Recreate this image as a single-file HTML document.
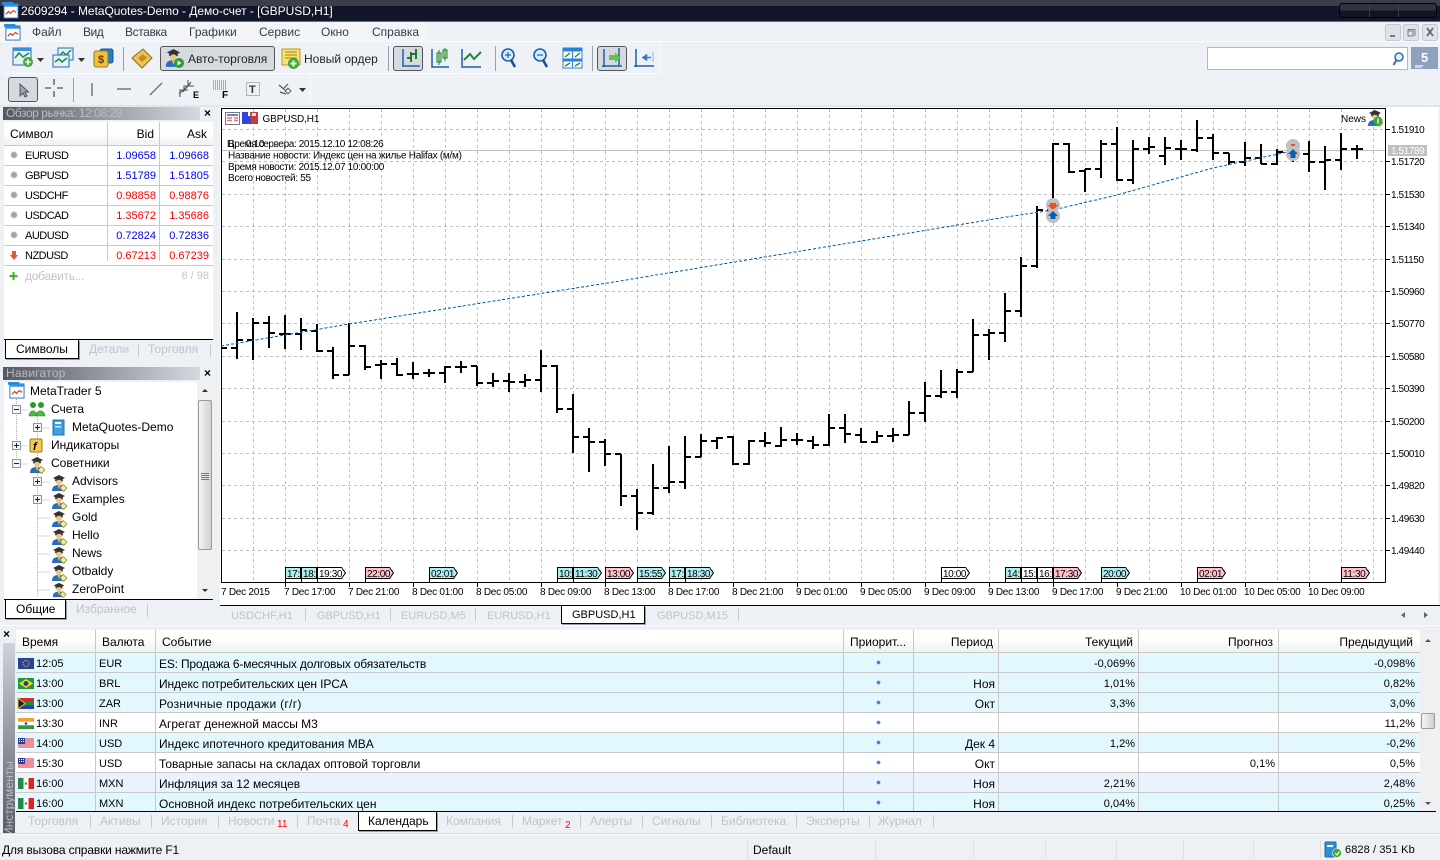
<!DOCTYPE html>
<html lang="ru"><head><meta charset="utf-8"><title>MetaTrader 5</title>
<style>
html,body{margin:0;padding:0}
body{position:relative;width:1440px;height:860px;overflow:hidden;background:#edf0f5;font:12px/14px "Liberation Sans","Noto Sans CJK SC",sans-serif;color:#000}
.a{position:absolute}
.t{position:absolute;white-space:nowrap;line-height:14px}
.g{color:#c0c4ca}
.bl{color:#00f;font-size:11px}.rd{color:#f00;font-size:11px}
.s{font-size:11px;letter-spacing:-.5px}
.e{font-size:11px}
.hd{position:absolute;left:3px;width:197px;height:13px;background:linear-gradient(90deg,#55575f,#d6d9e1);color:#b8bbc2;font-size:12px;line-height:13px;padding-left:3px;box-sizing:border-box}
.wh{position:absolute;background:#fff}
.ln{position:absolute;background:#c9c9c9}
.row{position:absolute;left:16px;width:1404px;height:20px;box-shadow:inset 0 -1px 0 #c9c9c9}
.row span{position:absolute;top:4px;white-space:nowrap;line-height:14px}
.tm{left:20px;font-size:11px}.cu{left:83px;font-size:11px}.ev{left:143px}
.p{right:425px}.c{right:285px;font-size:11px}.f{right:145px;font-size:11px}.v{right:5px;font-size:11px}
.dot{left:861px;top:8px!important;width:3px;height:3px;border-radius:50%;background:#3a7ce8;box-shadow:0 0 0 .5px #8fb6f2}
.act{position:absolute;background:#fff;border:1px solid #000;border-top:none;box-sizing:border-box;box-shadow:1px 1px 0 #9aa0a8}
svg text{font-family:"Liberation Sans",sans-serif}
</style></head>
<body>
<!-- title bar -->
<div class="a" style="left:0;top:0;width:1440px;height:6px;background:#3b3d49"></div>
<div class="a" style="left:0;top:6px;width:1440px;height:15px;background:#12162a"></div>
<div class="a" style="left:0;top:21px;width:1440px;height:1px;background:#6a6d78"></div>
<div class="t" style="left:21px;top:4px;color:#fff;letter-spacing:-.04px">2609294 - MetaQuotes-Demo - Демо-счет - [GBPUSD,H1]</div>
<div class="a" style="left:1339px;top:3px;width:98px;height:15px;box-sizing:border-box;border:1px solid #000;border-radius:3px;background:linear-gradient(#30323e 50%,#12141f 50%)"></div>
<div class="a" style="left:1369px;top:4px;width:1px;height:13px;background:#3c3e4a"></div>
<div class="a" style="left:1398px;top:4px;width:1px;height:13px;background:#3c3e4a"></div>
<!-- menu -->
<div class="a" style="left:0;top:22px;width:428px;height:19px;background:#f2f4f8"></div>
<div class="a" style="left:0;top:41px;width:1440px;height:1px;background:#fafbfc"></div>
<div class="t" style="left:32px;top:25px;color:#333c4a">Файл</div>
<div class="t" style="left:83px;top:25px;color:#333c4a;letter-spacing:-.5px">Вид</div>
<div class="t" style="left:125px;top:25px;color:#333c4a;letter-spacing:-.4px">Вставка</div>
<div class="t" style="left:189px;top:25px;color:#333c4a">Графики</div>
<div class="t" style="left:259px;top:25px;color:#333c4a">Сервис</div>
<div class="t" style="left:321px;top:25px;color:#333c4a">Окно</div>
<div class="t" style="left:372px;top:25px;color:#333c4a">Справка</div>
<!-- toolbars -->
<div class="a" style="left:3px;top:42px;width:657px;height:31px;background:#eef1f5;border-right:1px solid #fafbfc;border-bottom:1px solid #fafbfc"></div>
<div class="a" style="left:3px;top:74px;width:307px;height:29px;background:#eef1f5;border-right:1px solid #fafbfc"></div>
<div class="a" style="left:160px;top:46px;width:115px;height:25px;box-sizing:border-box;border:1px solid #555;border-radius:3px;background:#d6dae0"></div>
<div class="a" style="left:393px;top:46px;width:30px;height:25px;box-sizing:border-box;border:1px solid #555;border-radius:3px;background:#d6dae0"></div>
<div class="a" style="left:597px;top:46px;width:30px;height:25px;box-sizing:border-box;border:1px solid #555;border-radius:3px;background:#d6dae0"></div>
<div class="a" style="left:8px;top:77px;width:30px;height:25px;box-sizing:border-box;border:1px solid #555;border-radius:3px;background:#d6dae0"></div>
<div class="t" style="left:188px;top:52px;color:#222">Авто-торговля</div>
<div class="t" style="left:304px;top:52px;color:#222">Новый ордер</div>
<!-- search -->
<div class="a" style="left:1207px;top:47px;width:201px;height:23px;box-sizing:border-box;background:#fff;border:1px solid #b4b8bf"></div>
<div class="a" style="left:1411px;top:47px;width:27px;height:22px;background:#8ea2c0"></div>
<div class="t" style="left:1421px;top:51px;color:#fff;font-weight:bold;font-size:13px">5</div>
<!-- market watch -->
<div class="a" style="left:0;top:105px;width:1440px;height:2px;background:#e2e5ea"></div>
<div class="hd" style="top:107px;letter-spacing:-.45px">Обзор рынка: 12:08:28</div>
<div class="t" style="left:204px;top:106px;font-weight:bold">×</div>
<div class="wh" style="left:4px;top:122px;width:209px;height:217px"></div>
<div class="a" style="left:4px;top:122px;width:209px;height:23px;background:linear-gradient(#fff 50%,#f0f1f3);border-bottom:1px solid #c9c9c9"></div>
<div class="ln" style="left:107px;top:122px;width:1px;height:139px"></div>
<div class="ln" style="left:159px;top:122px;width:1px;height:139px"></div>
<div class="ln" style="left:4px;top:165px;width:209px;height:1px"></div>
<div class="ln" style="left:4px;top:185px;width:209px;height:1px"></div>
<div class="ln" style="left:4px;top:205px;width:209px;height:1px"></div>
<div class="ln" style="left:4px;top:225px;width:209px;height:1px"></div>
<div class="ln" style="left:4px;top:245px;width:209px;height:1px"></div>
<div class="ln" style="left:4px;top:265px;width:209px;height:1px"></div>
<div class="t" style="left:10px;top:127px">Символ</div>
<div class="t" style="right:1286px;top:127px">Bid</div>
<div class="t" style="right:1233px;top:127px">Ask</div>
<div class="t s" style="left:25px;top:149px">EURUSD</div><div class="t bl" style="right:1284px;top:149px">1.09658</div><div class="t bl" style="right:1231px;top:149px">1.09668</div>
<div class="t s" style="left:25px;top:169px">GBPUSD</div><div class="t bl" style="right:1284px;top:169px">1.51789</div><div class="t bl" style="right:1231px;top:169px">1.51805</div>
<div class="t s" style="left:25px;top:189px">USDCHF</div><div class="t rd" style="right:1284px;top:189px">0.98858</div><div class="t rd" style="right:1231px;top:189px">0.98876</div>
<div class="t s" style="left:25px;top:209px">USDCAD</div><div class="t rd" style="right:1284px;top:209px">1.35672</div><div class="t rd" style="right:1231px;top:209px">1.35686</div>
<div class="t s" style="left:25px;top:229px">AUDUSD</div><div class="t bl" style="right:1284px;top:229px">0.72824</div><div class="t bl" style="right:1231px;top:229px">0.72836</div>
<div class="t s" style="left:25px;top:249px">NZDUSD</div><div class="t rd" style="right:1284px;top:249px">0.67213</div><div class="t rd" style="right:1231px;top:249px">0.67239</div>
<div class="t g" style="left:25px;top:269px;letter-spacing:-.25px">добавить...</div>
<div class="t g e" style="right:1231px;top:269px">6 / 98</div>
<div class="a" style="left:4px;top:339px;width:209px;height:1px;background:#000"></div>
<div class="act" style="left:5px;top:340px;width:74px;height:19px"></div>
<div class="t" style="left:16px;top:342px">Символы</div>
<div class="t g" style="left:89px;top:342px">Детали</div>
<div class="ln" style="left:138px;top:344px;width:1px;height:13px"></div>
<div class="t g" style="left:148px;top:342px">Торговля</div>
<div class="ln" style="left:210px;top:344px;width:1px;height:13px"></div>
<!-- navigator -->
<div class="hd" style="top:367px;letter-spacing:.2px">Навигатор</div>
<div class="t" style="left:204px;top:366px;font-weight:bold">×</div>
<div class="wh" style="left:4px;top:382px;width:209px;height:217px"></div>
<div class="a" style="left:197px;top:382px;width:16px;height:217px;background:#f1f1f1"></div>
<div class="a" style="left:198px;top:400px;width:14px;height:150px;box-sizing:border-box;border:1px solid #9a9a9a;border-radius:2px;background:linear-gradient(90deg,#f4f4f4,#d0d0d0)"></div>
<div class="t" style="left:30px;top:384px">MetaTrader 5</div>
<div class="t" style="left:51px;top:402px">Счета</div>
<div class="t" style="left:72px;top:420px">MetaQuotes-Demo</div>
<div class="t" style="left:51px;top:438px">Индикаторы</div>
<div class="t" style="left:51px;top:456px">Советники</div>
<div class="t" style="left:72px;top:474px">Advisors</div>
<div class="t" style="left:72px;top:492px">Examples</div>
<div class="t" style="left:72px;top:510px">Gold</div>
<div class="t" style="left:72px;top:528px">Hello</div>
<div class="t" style="left:72px;top:546px">News</div>
<div class="t" style="left:72px;top:564px">Otbaldy</div>
<div class="t" style="left:72px;top:582px">ZeroPoint</div>
<div class="a" style="left:4px;top:599px;width:209px;height:1px;background:#000"></div>
<div class="act" style="left:5px;top:600px;width:61px;height:19px"></div>
<div class="t" style="left:16px;top:602px">Общие</div>
<div class="t g" style="left:76px;top:602px">Избранное</div>
<div class="ln" style="left:147px;top:604px;width:1px;height:13px"></div>
<!-- chart bg -->
<div class="wh" style="left:220px;top:107px;width:1218px;height:498px"></div>
<!-- chart tabs -->
<div class="a" style="left:220px;top:605px;width:1220px;height:1px;background:#000"></div>
<div class="act" style="left:561px;top:606px;width:84px;height:18px"></div>
<div class="t g e" style="left:231px;top:609px">USDCHF,H1</div>
<div class="ln" style="left:305px;top:608px;width:1px;height:13px"></div>
<div class="t g e" style="left:317px;top:609px">GBPUSD,H1</div>
<div class="ln" style="left:390px;top:608px;width:1px;height:13px"></div>
<div class="t g e" style="left:401px;top:609px">EURUSD,M5</div>
<div class="ln" style="left:475px;top:608px;width:1px;height:13px"></div>
<div class="t g e" style="left:487px;top:609px">EURUSD,H1</div>
<div class="t e" style="left:572px;top:608px">GBPUSD,H1</div>
<div class="t g e" style="left:657px;top:609px">GBPUSD,M15</div>
<div class="ln" style="left:738px;top:608px;width:1px;height:13px"></div>
<div class="a" style="left:0;top:625px;width:1440px;height:1px;background:#fafbfc"></div>
<!-- bottom panel -->
<div class="t" style="left:3px;top:627px;font-weight:bold">×</div>
<div class="a" style="left:3px;top:643px;width:12px;height:190px;background:linear-gradient(#cfd2d8,#5a5c64)"></div>
<div class="t" style="left:-29px;top:791px;width:76px;color:#b9bcc3;transform:rotate(-90deg)">Инструменты</div>
<div class="a" style="left:16px;top:630px;width:1404px;height:23px;box-sizing:border-box;background:linear-gradient(#fff 40%,#eff0f2);border-bottom:1px solid #c9c9c9"></div>
<div class="t" style="left:22px;top:635px">Время</div>
<div class="t" style="left:102px;top:635px">Валюта</div>
<div class="t" style="left:162px;top:635px">Событие</div>
<div class="t" style="left:850px;top:635px">Приорит...</div>
<div class="t" style="right:447px;top:635px">Период</div>
<div class="t" style="right:307px;top:635px">Текущий</div>
<div class="t" style="right:167px;top:635px">Прогноз</div>
<div class="t" style="right:27px;top:635px">Предыдущий</div>
<div class="row" style="top:653px;background:#e3f8fe"><span class="tm">12:05</span><span class="cu">EUR</span><span class="ev" style="letter-spacing:-.18px">ES: Продажа 6-месячных долговых обязательств</span><i class="dot a" style="top:9px"></i><span class="c">-0,069%</span><span class="v">-0,098%</span></div>
<div class="row" style="top:673px;background:#e3f8fe"><span class="tm">13:00</span><span class="cu">BRL</span><span class="ev" style="letter-spacing:-.12px">Индекс потребительских цен IPCA</span><i class="dot a" style="top:9px"></i><span class="p">Ноя</span><span class="c">1,01%</span><span class="v">0,82%</span></div>
<div class="row" style="top:693px;background:#e3f8fe"><span class="tm">13:00</span><span class="cu">ZAR</span><span class="ev" style="letter-spacing:.3px">Розничные продажи (г/г)</span><i class="dot a" style="top:9px"></i><span class="p">Окт</span><span class="c">3,3%</span><span class="v">3,0%</span></div>
<div class="row" style="top:713px;background:#fff"><span class="tm">13:30</span><span class="cu">INR</span><span class="ev">Агрегат денежной массы М3</span><i class="dot a" style="top:9px"></i><span class="v">11,2%</span></div>
<div class="row" style="top:733px;background:#e3f8fe"><span class="tm">14:00</span><span class="cu">USD</span><span class="ev">Индекс ипотечного кредитования MBA</span><i class="dot a" style="top:9px"></i><span class="p">Дек 4</span><span class="c">1,2%</span><span class="v">-0,2%</span></div>
<div class="row" style="top:753px;background:#fff"><span class="tm">15:30</span><span class="cu">USD</span><span class="ev" style="letter-spacing:-.05px">Товарные запасы на складах оптовой торговли</span><i class="dot a" style="top:9px"></i><span class="p">Окт</span><span class="f">0,1%</span><span class="v">0,5%</span></div>
<div class="row" style="top:773px;background:#e8f3fd"><span class="tm">16:00</span><span class="cu">MXN</span><span class="ev">Инфляция за 12 месяцев</span><i class="dot a" style="top:9px"></i><span class="p">Ноя</span><span class="c">2,21%</span><span class="v">2,48%</span></div>
<div class="row" style="top:793px;height:18px;background:#e3f8fe;box-shadow:none;overflow:hidden"><span class="tm">16:00</span><span class="cu">MXN</span><span class="ev">Основной индекс потребительских цен</span><i class="dot a" style="top:9px"></i><span class="p">Ноя</span><span class="c">0,04%</span><span class="v">0,25%</span></div>
<div class="ln" style="left:95px;top:630px;width:1px;height:181px"></div>
<div class="ln" style="left:155px;top:630px;width:1px;height:181px"></div>
<div class="ln" style="left:843px;top:630px;width:1px;height:181px"></div>
<div class="ln" style="left:913px;top:630px;width:1px;height:181px"></div>
<div class="ln" style="left:998px;top:630px;width:1px;height:181px"></div>
<div class="ln" style="left:1138px;top:630px;width:1px;height:181px"></div>
<div class="ln" style="left:1278px;top:630px;width:1px;height:181px"></div>
<div class="a" style="left:1420px;top:630px;width:16px;height:181px;background:#f0f0f0"></div>
<div class="a" style="left:1421px;top:713px;width:14px;height:16px;box-sizing:border-box;border:1px solid #9a9a9a;border-radius:2px;background:linear-gradient(90deg,#f6f6f6,#cfcfcf)"></div>
<div class="a" style="left:16px;top:811px;width:1420px;height:1px;background:#000"></div>
<div class="act" style="left:358px;top:812px;width:79px;height:19px"></div>
<div class="t g" style="left:28px;top:814px">Торговля</div>
<div class="t g" style="left:100px;top:814px">Активы</div>
<div class="t g" style="left:161px;top:814px">История</div>
<div class="t g" style="left:228px;top:814px">Новости</div>
<div class="t" style="left:277px;top:819px;color:#f00;font-size:10px;line-height:12px">11</div>
<div class="t g" style="left:307px;top:814px">Почта</div>
<div class="t" style="left:343px;top:819px;color:#f00;font-size:10px;line-height:12px">4</div>
<div class="t" style="left:368px;top:814px">Календарь</div>
<div class="t g" style="left:446px;top:814px">Компания</div>
<div class="t g" style="left:522px;top:814px">Маркет</div>
<div class="t" style="left:565px;top:820px;color:#f00;font-size:10px;line-height:12px">2</div>
<div class="t g" style="left:590px;top:814px">Алерты</div>
<div class="t g" style="left:652px;top:814px">Сигналы</div>
<div class="t g" style="left:721px;top:814px">Библиотека</div>
<div class="t g" style="left:806px;top:814px">Эксперты</div>
<div class="t g" style="left:878px;top:814px">Журнал</div>
<div class="ln" style="left:90px;top:815px;width:1px;height:13px"></div>
<div class="ln" style="left:151px;top:815px;width:1px;height:13px"></div>
<div class="ln" style="left:218px;top:815px;width:1px;height:13px"></div>
<div class="ln" style="left:297px;top:815px;width:1px;height:13px"></div>
<div class="ln" style="left:512px;top:815px;width:1px;height:13px"></div>
<div class="ln" style="left:580px;top:815px;width:1px;height:13px"></div>
<div class="ln" style="left:642px;top:815px;width:1px;height:13px"></div>
<div class="ln" style="left:711px;top:815px;width:1px;height:13px"></div>
<div class="ln" style="left:796px;top:815px;width:1px;height:13px"></div>
<div class="ln" style="left:869px;top:815px;width:1px;height:13px"></div>
<div class="ln" style="left:933px;top:815px;width:1px;height:13px"></div>
<!-- status -->
<div class="a" style="left:0;top:834px;width:1440px;height:1px;background:#fafbfc"></div>
<div class="a" style="left:0;top:833px;width:1440px;height:1px;background:#d8dbe0"></div>
<div class="t" style="left:2px;top:843px;letter-spacing:-.15px">Для вызова справки нажмите F1</div>
<div class="t" style="left:753px;top:843px">Default</div>
<div class="t e" style="left:1345px;top:843px;letter-spacing:.1px">6828 / 351 Kb</div>
<div class="ln" style="left:747px;top:840px;width:1px;height:19px;background:#dde0e5"></div>
<div class="ln" style="left:875px;top:840px;width:1px;height:19px;background:#dde0e5"></div>
<div class="ln" style="left:973px;top:840px;width:1px;height:19px;background:#dde0e5"></div>
<div class="ln" style="left:1045px;top:840px;width:1px;height:19px;background:#dde0e5"></div>
<div class="ln" style="left:1116px;top:840px;width:1px;height:19px;background:#dde0e5"></div>
<div class="ln" style="left:1183px;top:840px;width:1px;height:19px;background:#dde0e5"></div>
<div class="ln" style="left:1253px;top:840px;width:1px;height:19px;background:#dde0e5"></div>
<div class="ln" style="left:1320px;top:840px;width:1px;height:19px;background:#dde0e5"></div>

<svg class="a" style="left:0;top:0" width="1440" height="860" viewBox="0 0 1440 860">
<defs>
<symbol id="mt" viewBox="0 0 18 18"><rect x="0" y="0" width="12" height="3" fill="#2f8fe0"/><rect x="2" y="2" width="15" height="15" fill="#fff" stroke="#2f6fc0"/><rect x="2" y="2" width="15" height="3" fill="#2f8fe0"/><path d="M4 13L7 10L9 12L12 9L15 11" fill="none" stroke="#e03a20" stroke-width="1.3"/></symbol>
<symbol id="adv" viewBox="0 0 16 18"><path d="M8 1L14 4L8 7L2 4Z" fill="#333"/><path d="M4 5V7C6 8 10 8 12 7V5L8 7Z" fill="#444"/><circle cx="8" cy="8.5" r="2.8" fill="#e8c888"/><path d="M1 17C1 12 4 11 8 11C12 11 14 12 14 17Z" fill="#2a6cc4"/><path d="M6.5 11L8 15L9.5 11Z" fill="#f2d020"/><path d="M12 10.5L16 14L12.5 17.5L9 14Z" fill="#f7e89a" stroke="#8a7a20" stroke-width=".7"/></symbol>
<symbol id="green" viewBox="0 0 10 10"><circle cx="5" cy="5" r="4.6" fill="#3fb33f" stroke="#2b8a2b" stroke-width=".6"/><path d="M5 2.3V7.7M2.3 5H7.700" stroke="#fff" stroke-width="1.6"/></symbol>
<symbol id="ball" viewBox="0 0 8 8"><circle cx="4" cy="4" r="3" fill="#a2a2a2" stroke="#c4c4c4"/></symbol>
<symbol id="plus" viewBox="0 0 9 9"><rect x=".5" y=".5" width="8" height="8" fill="#f4f5f7" stroke="#8a929c"/><path d="M2 4.5H7M4.5 2V7" stroke="#223" stroke-width="1"/></symbol>
<symbol id="minus" viewBox="0 0 9 9"><rect x=".5" y=".5" width="8" height="8" fill="#f4f5f7" stroke="#8a929c"/><path d="M2 4.5H7" stroke="#223" stroke-width="1"/></symbol>
<symbol id="us" viewBox="0 0 16 11"><rect width="16" height="11" fill="#fff"/><path d="M0 1H16M0 3H16M0 5H16M0 7H16M0 9H16" stroke="#d23" stroke-width="1"/><rect width="7" height="6" fill="#2b3f9c"/><path d="M1 1.5H6M1 3.5H6" stroke="#fff" stroke-dasharray="1 1"/></symbol>
<symbol id="mx" viewBox="0 0 16 11"><rect width="5.5" height="11" fill="#1f8a45"/><rect x="5.5" width="5" height="11" fill="#fff"/><rect x="10.5" width="5.5" height="11" fill="#d8232a"/><circle cx="8" cy="5.5" r="1.3" fill="#8a7a30"/></symbol>
</defs>

<!-- menu / title icons -->
<use href="#mt" x="2" y="2" width="17" height="17"/>
<use href="#mt" x="4" y="24" width="17" height="17"/>
<!-- MDI buttons -->
<g fill="#dfe3e9" stroke="#c4c9d1"><rect x="1385.5" y="24.5" width="15" height="16" rx="2"/><rect x="1403.5" y="24.5" width="15" height="16" rx="2"/><rect x="1422.5" y="24.5" width="15" height="16" rx="2"/></g>
<path d="M1390 35H1395V37H1390Z" fill="#778"/>
<path d="M1408 29.5H1415V36M1408 29.5V36H1413V31H1408" fill="none" stroke="#778"/>
<path d="M1427 28L1433 36M1433 28L1427 36" stroke="#667" stroke-width="1.8"/>
<!-- toolbar 1 -->
<g>
<rect x="13" y="48" width="18" height="17" fill="#e6f2fb" stroke="#2668b8"/><rect x="13" y="48" width="18" height="3" fill="#3d8fdc"/><path d="M15 58L19 53L23 57L29 53" fill="none" stroke="#1d8a3a" stroke-width="1.5"/><use href="#green" x="23" y="57" width="10" height="10"/>
<path d="M37 58H44L40.5 62Z" fill="#333"/>
<rect x="58" y="48" width="15" height="12" fill="#e6f2fb" stroke="#2668b8"/><path d="M60 55L63 52L66 55L71 50" fill="none" stroke="#1d8a3a" stroke-width="1.5"/><rect x="53" y="55" width="16" height="12" fill="#e6f2fb" stroke="#2668b8"/><path d="M55 62L59 59L62 62L67 58" fill="none" stroke="#1d8a3a" stroke-width="1.5"/>
<path d="M78 58H85L81.5 62Z" fill="#333"/>
<rect x="100" y="49" width="13" height="14" rx="2" fill="#1b7fd6" stroke="#125a9a"/><rect x="94" y="51" width="14" height="16" rx="2" fill="#f0c040" stroke="#9b7a10"/><text x="98" y="63" font-size="11" font-weight="bold" fill="#5a4208">$</text>
<rect x="123" y="47" width="1" height="24" fill="#9aa0a8"/>
<path d="M132 58L143 49L152 58L142 68Z" fill="#e9c25c" stroke="#8d6b14"/><path d="M138 58L143 54L147 58L142 62Z" fill="#c88a20"/>
<use href="#adv" x="164" y="48" width="19" height="20"/><circle cx="179" cy="63" r="5" fill="#2b9a3a"/><path d="M177.5 60.5V65.5L181.5 63Z" fill="#fff"/>
<rect x="282" y="49" width="18" height="16" fill="#f8e07a" stroke="#b79820"/><path d="M285 52H297M285 55H297M285 58H297" stroke="#a48815"/><use href="#green" x="288" y="58" width="11" height="11"/>
<rect x="388" y="46" width="1" height="25" fill="#9aa0a8"/>
<path d="M411 52V62M407 58H411M411 54H414M416 49V59M416 54H413" fill="none" stroke="#1d7a2f" stroke-width="2"/><path d="M402 66H420" stroke="#1d5fb0" stroke-width="1.5"/><path d="M403 49V66" stroke="#1d5fb0" stroke-width="1.5"/>
<path d="M432 49V67H449" fill="none" stroke="#1d5fb0" stroke-width="1.5"/><rect x="437" y="53" width="4" height="9" fill="#d8f0d0" stroke="#1d7a2f"/><rect x="443" y="50" width="4" height="8" fill="#d8f0d0" stroke="#1d7a2f"/><path d="M439 50V65M445 48V61" stroke="#1d7a2f"/>
<path d="M462 49V67H481" fill="none" stroke="#1d5fb0" stroke-width="1.5"/><path d="M464 60L470 54L474 59L481 52" fill="none" stroke="#1d8a3a" stroke-width="2"/>
<rect x="495" y="46" width="1" height="25" fill="#9aa0a8"/>
<circle cx="508" cy="55" r="6" fill="#d8ecff" stroke="#1e5fb4" stroke-width="1.6"/><path d="M505 55H511M508 52V58" stroke="#1e5fb4" stroke-width="1.2"/><path d="M511 60L515 67" stroke="#1e4f94" stroke-width="2.6"/>
<circle cx="540" cy="55" r="6" fill="#d8ecff" stroke="#1e5fb4" stroke-width="1.6"/><path d="M537 55H543" stroke="#1e5fb4" stroke-width="1.2"/><path d="M543 60L547 67" stroke="#1e4f94" stroke-width="2.6"/>
<rect x="563" y="48" width="19" height="20" fill="#fff" stroke="#2a82d6"/><path d="M563 50H582M563 60H582" stroke="#2a82d6" stroke-width="3"/><path d="M572.5 48V68" stroke="#2a82d6"/><path d="M565 57L570 53M575 57L580 53M565 66L570 63M575 66L580 63" stroke="#1d8a3a" stroke-width="1.4"/>
<rect x="592" y="46" width="1" height="25" fill="#9aa0a8"/>
<path d="M604 49V67M602 66H622M619 48V66" fill="none" stroke="#1d5fb0" stroke-width="1.5"/><path d="M609 55H615V52L620 57.5L615 63V60H609Z" fill="#62c34b"/>
<path d="M636 49V67M634 66H654" fill="none" stroke="#1d5fb0" stroke-width="1.5"/><path d="M653 52V62M651 57H647V54L642 57.5L647 61V58H651" fill="#3a79c8" stroke="#3a79c8" stroke-width=".5"/>
</g>
<!-- search icon -->
<circle cx="1399" cy="57" r="4" fill="#e6f1fc" stroke="#2c6ab8" stroke-width="1.5"/><path d="M1396.5 60L1393.5 65" stroke="#2c6ab8" stroke-width="2"/>
<path d="M1415 65H1424L1421 68H1415Z" fill="#cfd7e4"/>
<!-- toolbar 2 -->
<g>
<path d="M20 84V96L23 93L25 97L27 96L25 92H28.500Z" fill="#a0a5ac" stroke="#555"/>
<path d="M54 79V85M54 91V97M45 88H51M57 88H63" stroke="#555" stroke-width="1.3"/>
<rect x="73" y="78" width="1" height="24" fill="#9aa0a8"/>
<path d="M92 83V96" stroke="#666" stroke-width="1.3"/>
<path d="M117 89H131" stroke="#666" stroke-width="1.3"/>
<path d="M150 95L162 83" stroke="#777" stroke-width="1.5"/>
<path d="M180 97V90H184V86H188V80M183 92L191 82M179 94L190 84M182 90H188M185 86H194" fill="none" stroke="#555" stroke-width="1.1"/>
<text x="193" y="98" font-size="9" font-weight="bold">E</text>
<path d="M213 81H227M213 83H227M213 85H227M213 87H227M213 89H227" stroke="#666" stroke-dasharray="1 1"/>
<text x="222" y="98" font-size="10" font-weight="bold">F</text>
<rect x="246.500" y="82.500" width="13" height="13" fill="none" stroke="#777" stroke-dasharray="1 1"/>
<text x="249" y="93" font-size="11" font-weight="bold" font-family="Liberation Serif" fill="#333">T</text>
<path d="M279 85L285 90M288 84L284 88M280 92L286 94" fill="none" stroke="#555" stroke-width="1.2"/><rect x="286" y="89" width="4" height="4" fill="none" stroke="#555" transform="rotate(45 288 91)"/>
<path d="M299 88H306L302.500 92Z" fill="#333"/>
</g>
<!-- panel little scroll arrows -->
<path d="M202 392H208L205 389Z" fill="#333"/><path d="M202 589H208L205 592Z" fill="#333"/>
<path d="M201 473.500H209M201 475.500H209M201 477.500H209M201 479.500H209" stroke="#777"/>
<path d="M1425 642H1431L1428 639Z" fill="#555"/><path d="M1425 802H1431L1428 805Z" fill="#555"/>
<path d="M1405 612V618L1401 615Z" fill="#666"/><path d="M1424 612V618L1428 615Z" fill="#666"/>
<!-- market watch icons -->
<use href="#ball" x="10" y="151" width="8" height="8"/><use href="#ball" x="10" y="171" width="8" height="8"/><use href="#ball" x="10" y="191" width="8" height="8"/><use href="#ball" x="10" y="211" width="8" height="8"/><use href="#ball" x="10" y="231" width="8" height="8"/>
<path d="M12 251H16V255H18L14 260L10 255H12Z" fill="#e9552e"/>
<path d="M13.500 272V280M9.500 276H17.500" stroke="#3cb81f" stroke-width="2"/>
<!-- navigator -->
<path d="M16.500 397V467M16.500 410H28M37.500 417V597M37.500 428H50M16.500 446H28M16.500 464H28M37.500 482H50M37.500 500H50M37.500 518H50M37.500 536H50M37.500 554H50M37.500 572H50M37.500 590H50" stroke="#aab0b6" stroke-dasharray="1 1" fill="none"/>
<use href="#mt" x="8" y="382" width="17" height="17"/>
<use href="#minus" x="12" y="405" width="9" height="9"/>
<use href="#plus" x="33" y="423" width="9" height="9"/>
<use href="#plus" x="12" y="441" width="9" height="9"/>
<use href="#minus" x="12" y="459" width="9" height="9"/>
<use href="#plus" x="33" y="477" width="9" height="9"/>
<use href="#plus" x="33" y="495" width="9" height="9"/>
<circle cx="33" cy="405" r="3" fill="#2f9a2f"/><circle cx="41" cy="405" r="3" fill="#2f9a2f"/><path d="M29 416C29 409 37 409 37 416ZM36 416C36 409 45 409 45 416Z" fill="#4db84a" stroke="#2a8a2a" stroke-width=".5"/>
<rect x="53" y="420" width="11" height="15" fill="#3d9fe4" stroke="#1c6fb0"/><rect x="55" y="422" width="6" height="2" fill="#fff"/><rect x="55" y="426" width="6" height="1.500" fill="#cfe8fa"/>
<rect x="30" y="439" width="12" height="13" rx="1.500" fill="#f3c947" stroke="#9a7a18"/><text x="33" y="450" font-size="11" font-style="italic" font-family="Liberation Serif" font-weight="bold">f</text>
<use href="#adv" x="29" y="456" width="16" height="18"/>
<use href="#adv" x="51" y="474" width="16" height="18"/>
<use href="#adv" x="51" y="492" width="16" height="18"/>
<use href="#adv" x="51" y="510" width="16" height="18"/>
<use href="#adv" x="51" y="528" width="16" height="18"/>
<use href="#adv" x="51" y="546" width="16" height="18"/>
<use href="#adv" x="51" y="564" width="16" height="18"/>
<use href="#adv" x="51" y="582" width="16" height="16"/>

<!-- CHART -->
<g shape-rendering="crispEdges">
<path stroke="#c0c0c0" stroke-dasharray="3 3" fill="none" d="M222 129.500H1385M222 161.500H1385M222 194.500H1385M222 226.500H1385M222 259.500H1385M222 291.500H1385M222 323.500H1385M222 356.500H1385M222 388.500H1385M222 421.500H1385M222 453.500H1385M222 485.500H1385M222 518.500H1385M222 550.500H1385"/>
<path stroke="#c0c0c0" stroke-dasharray="3 3" fill="none" d="M253.500 109V582M285.500 109V582M317.500 109V582M349.500 109V582M381.500 109V582M413.500 109V582M445.500 109V582M477.500 109V582M509.500 109V582M541.500 109V582M573.500 109V582M605.500 109V582M637.500 109V582M669.500 109V582M701.500 109V582M733.500 109V582M765.500 109V582M797.500 109V582M829.500 109V582M861.500 109V582M893.500 109V582M925.500 109V582M957.500 109V582M989.500 109V582M1021.500 109V582M1053.500 109V582M1085.500 109V582M1117.500 109V582M1149.500 109V582M1181.500 109V582M1213.500 109V582M1245.500 109V582M1277.500 109V582M1309.500 109V582M1341.500 109V582M1373.500 109V582"/>
<path stroke="#c0c0c0" d="M222 150.500H1385"/>
<path stroke="#000" fill="none" d="M221.500 108V582.500M221 108.500H1385.500M1385.500 108V582.500M221 582.500H1385.500"/>
<path stroke="#000" fill="none" d="M1386 129.500H1390M1386 161.500H1390M1386 194.500H1390M1386 226.500H1390M1386 259.500H1390M1386 291.500H1390M1386 323.500H1390M1386 356.500H1390M1386 388.500H1390M1386 421.500H1390M1386 453.500H1390M1386 485.500H1390M1386 518.500H1390M1386 550.500H1390"/>
<path stroke="#000" fill="none" d="M285.500 583V587M349.500 583V587M413.500 583V587M477.500 583V587M541.500 583V587M605.500 583V587M669.500 583V587M733.500 583V587M797.500 583V587M861.500 583V587M925.500 583V587M989.500 583V587M1053.500 583V587M1117.500 583V587M1181.500 583V587M1245.500 583V587M1309.500 583V587"/>
<path stroke="#000" stroke-width="2" fill="none" d="M222 348H227
M237 312V359M231 348H237M237 340H243
M253 318V360M247 340H253M253 323H259
M269 316V348M263 323H269M269 333H275
M285 315V349M279 334H285M285 334H291
M301 318V350M295 334H301M301 330H307
M317 324V352M311 331H317M317 351H323
M333 347V379M327 351H333M333 375H339
M349 323V375M343 375H349M349 346H355
M365 345V370M359 346H365M365 367H371
M381 360V379M375 365H381M381 364H387
M397 358V376M391 364H397M397 375H403
M413 362V379M407 374H413M413 374H419
M429 369V377M423 373H429M429 373H435
M445 366V383M439 373H445M445 367H451
M461 361V373M455 367H461M461 367H467
M477 366V386M471 366H477M477 383H483
M493 373V387M487 383H493M493 381H499
M509 373V392M503 381H509M509 382H515
M525 374V387M519 382H525M525 380H531
M541 350V392M535 380H541M541 366H547
M557 365V413M551 366H557M557 409H563
M573 394V453M567 409H573M573 437H579
M589 428V472M583 437H589M589 442H595
M605 439V466M599 442H605M605 454H611
M621 454V506M615 454H621M621 496H627
M637 489V530M631 496H637M637 513H643
M653 464V515M647 513H653M653 488H659
M669 446V493M663 488H669M669 482H675
M685 436V489M679 482H685M685 457H691
M701 434V457M695 457H701M701 441H707
M717 437V449M711 441H717M717 438H723
M733 436V465M727 437H733M733 464H739
M749 440V465M743 464H749M749 441H755
M765 432V447M759 441H765M765 443H771
M781 427V447M775 446H781M781 440H787
M797 433V445M791 440H797M797 440H803
M813 436V449M807 441H813M813 445H819
M829 414V446M823 445H829M829 428H835
M845 414V443M839 428H845M845 434H851
M861 428V443M855 435H861M861 442H867
M877 431V443M871 442H877M877 436H883
M893 428V442M887 436H893M893 435H899
M909 401V435M903 435H909M909 413H915
M925 382V422M919 413H925M925 396H931
M941 370V398M935 396H941M941 392H947
M957 369V398M951 392H957M957 372H963
M973 319V372M967 372H973M973 335H979
M989 329V360M983 335H989M989 333H995
M1005 293V342M999 333H1005M1005 311H1011
M1021 257V317M1015 311H1021M1021 266H1027
M1037 206V268M1031 266H1037M1037 210H1043
M1053 143V223M1047 210H1053M1053 144H1059
M1069 143V173M1063 144H1069M1069 172H1075
M1085 169V192M1079 171H1085M1085 169H1091
M1101 140V178M1095 169H1101M1101 144H1107
M1117 127V181M1111 144H1117M1117 180H1123
M1133 140V184M1127 180H1133M1133 149H1139
M1149 137V154M1143 149H1149M1149 147H1155
M1165 137V165M1159 156H1165M1165 148H1171
M1181 140V160M1175 149H1181M1181 149H1187
M1197 120V152M1191 150H1197M1197 138H1203
M1213 134V160M1207 138H1213M1213 153H1219
M1229 153V165M1223 153H1229M1229 162H1235
M1245 142V166M1239 162H1245M1245 158H1251
M1261 144V164M1255 158H1261M1261 164H1267
M1277 149V165M1271 164H1277M1277 152H1283
M1293 142V162M1287 152H1293M1293 152H1299
M1309 141V172M1303 154H1309M1309 162H1315
M1325 146V190M1319 162H1325M1325 160H1331
M1341 133V170M1335 160H1341M1341 149H1347
M1357 145V159M1351 149H1357M1357 149H1363"/>
<polyline fill="none" stroke="#005fb0" stroke-width="1" stroke-dasharray="3 2" points="221,346 349,324 620,281 1000,218 1053,210 1117,195 1213,168 1283,153 1293,150"/>
</g>
<!-- news bubbles -->
<g>
<circle cx="1053" cy="205" r="7" fill="#c0c0c0"/><path d="M1050 203H1056V205H1058.500L1053 210L1047.500 205H1050Z" fill="#e8502a"/>
<circle cx="1053" cy="216" r="7" fill="#c0c0c0"/><path d="M1053 211L1058 216H1055.500V219H1050.500V216H1048Z" fill="#0b5fb0"/>
<circle cx="1293" cy="146" r="7" fill="#c0c0c0"/><path d="M1291 144H1295V146H1291Z" fill="#e8502a"/>
<circle cx="1293" cy="154" r="7" fill="#c0c0c0"/><path d="M1293 149L1298 154H1295.500V158H1290.500V154H1288Z" fill="#0b5fb0"/>
</g>
<!-- chart corner icons -->
<rect x="225.500" y="112.500" width="14" height="12" fill="#fff" stroke="#777"/><path d="M227 115H238" stroke="#6b7fd8" stroke-width="2"/><path d="M227 118H232M234 118H238M227 120.500H232M234 120.500H238" stroke="#e07878" stroke-width="1.500"/>
<path d="M242 112H248V116H251V124H242Z" fill="#3046d8"/><path d="M250 112H258V124H251Z" fill="#c83a3a"/><rect x="252" y="113" width="4" height="3" fill="#eee"/>
<text x="262.500" y="122" font-size="10" letter-spacing="-.1">GBPUSD,H1</text>
<text x="1341" y="122" font-size="10">News</text>
<use href="#adv" x="1367" y="109" width="16" height="18"/><circle cx="1378" cy="121" r="4.500" fill="#3aa82f"/><path d="M1378 118.500V123.500" stroke="#fff" stroke-width="1.300"/>
<!-- comment -->
<g font-size="10" letter-spacing="-.3">
<text x="228" y="147" letter-spacing="-.38">Время сервера: 2015.12.10 12:08:26</text>
<text x="227" y="147">Ц</text><text x="246" y="147">0.10</text>
<text x="228" y="158.500" letter-spacing="-.28">Название новости: Индекс цен на жилье Halifax (м/м)</text>
<text x="228" y="170" letter-spacing="-.33">Время новости: 2015.12.07 10:00:00</text>
<text x="228" y="181">Всего новостей: 55</text>
</g>
<!-- price labels -->
<g font-size="10" letter-spacing="-.4">
<text x="1391" y="133">1.51910</text><text x="1391" y="165">1.51720</text><text x="1391" y="198">1.51530</text><text x="1391" y="230">1.51340</text><text x="1391" y="263">1.51150</text><text x="1391" y="295">1.50960</text><text x="1391" y="327">1.50770</text><text x="1391" y="360">1.50580</text><text x="1391" y="392">1.50390</text><text x="1391" y="425">1.50200</text><text x="1391" y="457">1.50010</text><text x="1391" y="489">1.49820</text><text x="1391" y="522">1.49630</text><text x="1391" y="554">1.49440</text>
<rect x="1388" y="145" width="39" height="11" fill="#c0c0c0"/>
<text x="1391" y="154" fill="#fff">1.51789</text>
</g>
<!-- time labels -->
<g font-size="10" letter-spacing="-.25">
<text x="221" y="595">7 Dec 2015</text><text x="284" y="595">7 Dec 17:00</text><text x="348" y="595">7 Dec 21:00</text><text x="412" y="595">8 Dec 01:00</text><text x="476" y="595">8 Dec 05:00</text><text x="540" y="595">8 Dec 09:00</text><text x="604" y="595">8 Dec 13:00</text><text x="668" y="595">8 Dec 17:00</text><text x="732" y="595">8 Dec 21:00</text><text x="796" y="595">9 Dec 01:00</text><text x="860" y="595">9 Dec 05:00</text><text x="924" y="595">9 Dec 09:00</text><text x="988" y="595">9 Dec 13:00</text><text x="1052" y="595">9 Dec 17:00</text><text x="1116" y="595">9 Dec 21:00</text><text x="1180" y="595">10 Dec 01:00</text><text x="1244" y="595">10 Dec 05:00</text><text x="1308" y="595">10 Dec 09:00</text>
</g>
<!-- event tags -->
<g stroke="#000" stroke-width="1" shape-rendering="crispEdges" fill="#aeeeee">
<path d="M285.500 582V567.500H300.500V578.500H285.500"/><path d="M301.500 582V567.500H316.500V578.500H301.500"/>
<path fill="#fff" d="M317.500 582V567.500H341.500L345.500 573L341.500 578.500H317.500"/>
<path fill="#ffc0cb" d="M365.500 582V567.500H389.500L393.500 573L389.500 578.500H365.500"/>
<path d="M429.500 582V567.500H453.500L457.500 573L453.500 578.500H429.500"/>
<path d="M557.500 582V567.500H572.500V578.500H557.500"/>
<path d="M573.500 582V567.500H597.500L601.500 573L597.500 578.500H573.500"/>
<path fill="#ffc0cb" d="M605.500 582V567.500H629.500L633.500 573L629.500 578.500H605.500"/>
<path d="M637.500 582V567.500H661.500L665.500 573L661.500 578.500H637.500"/>
<path d="M669.500 582V567.500H684.500V578.500H669.500"/>
<path d="M685.500 582V567.500H709.500L713.500 573L709.500 578.500H685.500"/>
<path fill="#fff" d="M941.500 582V567.500H965.500L969.500 573L965.500 578.500H941.500"/>
<path d="M1005.500 582V567.500H1020.500V578.500H1005.500"/>
<path fill="#fff" d="M1021.500 582V567.500H1036.500V578.500H1021.500"/>
<path fill="#fff" d="M1037.500 582V567.500H1052.500V578.500H1037.500"/>
<path fill="#ffc0cb" d="M1053.500 582V567.500H1077.500L1081.500 573L1077.500 578.500H1053.500"/>
<path d="M1101.500 582V567.500H1125.500L1129.500 573L1125.500 578.500H1101.500"/>
<path fill="#ffc0cb" d="M1197.500 582V567.500H1221.500L1225.500 573L1221.500 578.500H1197.500"/>
<path fill="#ffc0cb" d="M1341.500 582V567.500H1365.500L1369.500 573L1365.500 578.500H1341.500"/>
</g>
<g font-size="10" letter-spacing="-.4">
<text x="287" y="577">17:</text><text x="303" y="577">18:</text><text x="319" y="577">19:30</text><text x="367" y="577">22:00</text><text x="431" y="577">02:01</text><text x="559" y="577">10:</text><text x="575" y="577">11:30</text><text x="607" y="577">13:00</text><text x="639" y="577">15:55</text><text x="671" y="577">17:</text><text x="687" y="577">18:30</text><text x="943" y="577">10:00</text><text x="1007" y="577">14:</text><text x="1023" y="577">15:</text><text x="1039" y="577">16:</text><text x="1055" y="577">17:30</text><text x="1103" y="577">20:00</text><text x="1199" y="577">02:01</text><text x="1343" y="577">11:30</text>
</g>
<!-- flags -->
<g>
<rect x="18" y="658" width="16" height="11" fill="#2c3f9a"/><circle cx="26" cy="663.500" r="3" fill="none" stroke="#f0d020" stroke-dasharray="1 1"/>
<rect x="18" y="678" width="16" height="11" fill="#1e9a3c"/><path d="M19 683.500L26 679L33 683.500L26 688Z" fill="#f5dc20"/><circle cx="26" cy="683.500" r="2.500" fill="#2a3f9a"/>
<rect x="18" y="698" width="16" height="11" fill="#fff"/><rect x="18" y="698" width="16" height="3.500" fill="#d0302a"/><rect x="18" y="705.500" width="16" height="3.500" fill="#2a3fa0"/><path d="M18 701.500H34V705.500H18Z" fill="#1e8a48"/><path d="M18 698L25 703.500L18 709Z" fill="#1e1e1e" stroke="#f0c020"/>
<rect x="18" y="718" width="16" height="11" fill="#fff"/><rect x="18" y="718" width="16" height="3.700" fill="#f0a030"/><rect x="18" y="725.300" width="16" height="3.700" fill="#2a9a3c"/><circle cx="26" cy="723.500" r="1.300" fill="#2a3f9a"/>
<use href="#us" x="18" y="738" width="16" height="11"/>
<use href="#us" x="18" y="758" width="16" height="11"/>
<use href="#mx" x="18" y="778" width="16" height="11"/>
<use href="#mx" x="18" y="798" width="16" height="11"/>
</g>
<!-- status icon -->
<rect x="1325" y="842" width="11" height="15" rx="1" fill="#2a8fd8" stroke="#1a6aa8"/><rect x="1327" y="845" width="6" height="2" fill="#e8f4fc"/><circle cx="1337" cy="853" r="4.500" fill="#3aa82f" stroke="#fff" stroke-width=".6"/><path d="M1335 853L1337 855L1339.500 851.500" fill="none" stroke="#fff" stroke-width="1.200"/>
</svg>
</body></html>
